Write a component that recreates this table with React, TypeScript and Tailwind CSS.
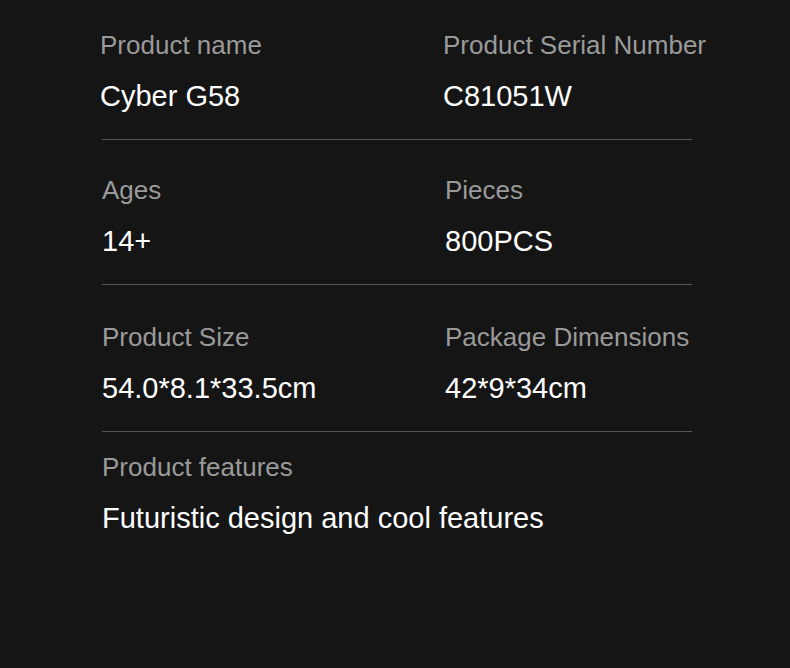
const ROWS: { pad: string; fields: { label: string; value: string }[] }[] = [
  {
    pad: 'pt-[32px]',
    fields: [
      { label: 'Product name', value: 'Cyber G58' },
      { label: 'Product Serial Number', value: 'C81051W' },
    ],
  },
  {
    pad: 'pt-[37px]',
    fields: [
      { label: 'Ages', value: '14+' },
      { label: 'Pieces', value: '800PCS' },
    ],
  },
  {
    pad: 'pt-[39px]',
    fields: [
      { label: 'Product Size', value: '54.0*8.1*33.5cm' },
      { label: 'Package Dimensions', value: '42*9*34cm' },
    ],
  },
];

function Field({ label, value, shift }: { label: string; value: string; shift?: boolean }) {
  return (
    <div className={shift ? '-ml-[2px] whitespace-nowrap' : 'whitespace-nowrap'}>
      <p className="text-[26px] leading-[26px] text-[#9a9a9a]">{label}</p>
      <p className="mt-[24px] text-[29px] leading-[29px] text-white">{value}</p>
    </div>
  );
}

export default function App() {
  return (
    <div
      className="h-[668px] w-[790px] bg-[#151515] pl-[102px]"
      style={{ fontFamily: '"Liberation Sans", Arial, sans-serif' }}
    >
      <div className="w-[590px]">
        {ROWS.map((row, i) => (
          <div
            key={i}
            className={`grid grid-cols-[343px_1fr] border-b border-[#555] pb-[28px] ${row.pad}`}
          >
            {row.fields.map(f => (
              <Field key={f.label} {...f} shift={i === 0} />
            ))}
          </div>
        ))}
        <div className="pt-[22px] whitespace-nowrap">
          <p className="text-[26px] leading-[26px] text-[#9a9a9a]">Product features</p>
          <p className="mt-[24px] text-[29px] leading-[29px] text-white">
            Futuristic design and cool features
          </p>
        </div>
      </div>
    </div>
  );
}
